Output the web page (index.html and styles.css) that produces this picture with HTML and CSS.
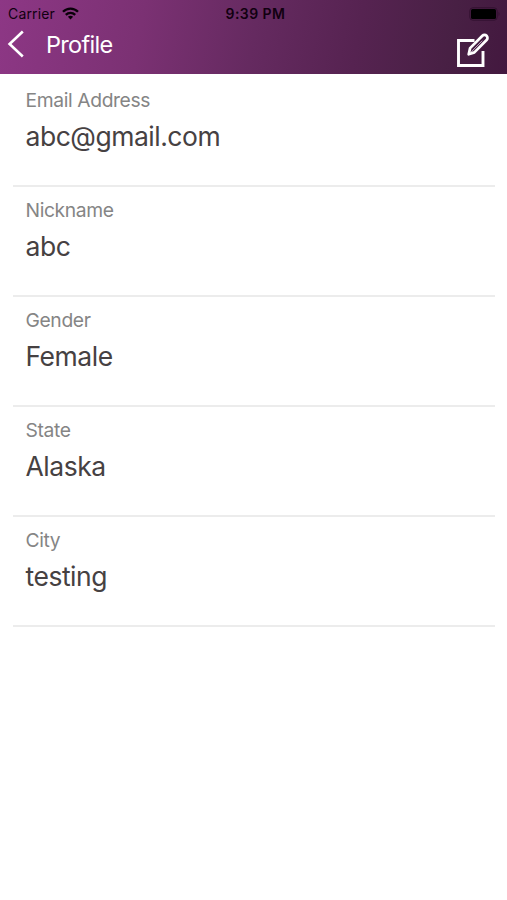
FILE: index.html
```html
<!DOCTYPE html>
<html lang="en">
<head>
<meta charset="utf-8">
<title>Profile</title>
<link rel="stylesheet" href="styles.css">
</head>
<body>
<header class="header">
  <div class="status">
    <div class="carrier"><span>Carrier</span>
      <svg class="wifi" width="17" height="13" viewBox="0 0 17 13" fill="none" stroke="#090009" stroke-width="2.3"><path d="M1 4.8C5.2.5 11.8.5 16 4.8M3.8 7.9c2.7-2.7 6.7-2.7 9.4 0"/><path d="M5.9 9.7c1.5-1.4 3.7-1.4 5.2 0l-2.6 2.7z" fill="#090009" stroke="none"/></svg>
    </div>
    <time class="clock">9:39 PM</time>
    <svg class="battery" width="32" height="14" viewBox="0 0 32 14"><rect x=".8" y=".8" width="27.4" height="12.4" rx="3" fill="none" stroke="#321030" stroke-width="1"/><rect x="2" y="2" width="25" height="10" rx="1.5" fill="#000"/><path d="M29.5 4.8q2 2.2 0 4.4z" fill="#321030"/></svg>
  </div>
  <nav class="nav">
    <svg class="back" width="18" height="30" viewBox="0 0 18 30" fill="none" stroke="#fff" stroke-width="2.6"><path d="M15.8 2.5 2.6 15l13.2 12.5"/></svg>
    <h1 class="title">Profile</h1>
    <svg class="edit" width="34" height="34" viewBox="0 0 34 34" fill="none" stroke="#fff" stroke-width="2.9"><path d="M18.5 6.5H2.5v25H27V17"/><path d="m12.7 20.3 1.4-6.2L26.4 1.8a2.9 2.9 0 0 1 4.2 4.2L18.4 18.4z" stroke-width="2.7" stroke-linejoin="round"/><path d="m14.7 18.5 11.5-11.8" stroke="#ddcede" stroke-width=".8"/></svg>
  </nav>
</header>
<main class="fields">
  <section class="field"><div class="label">Email Address</div><div class="value">abc@gmail.com</div></section>
  <section class="field"><div class="label">Nickname</div><div class="value">abc</div></section>
  <section class="field"><div class="label">Gender</div><div class="value">Female</div></section>
  <section class="field"><div class="label">State</div><div class="value">Alaska</div></section>
  <section class="field"><div class="label">City</div><div class="value">testing</div></section>
</main>
</body>
</html>
```
FILE: styles.css
```css
* { box-sizing: border-box; }
body { margin: 0; background: #fff; font-family: Inter, "Liberation Sans", sans-serif; }
svg { display: block; flex: none; overflow: visible; }
.header { height: 74px; background: linear-gradient(100deg, #8d3785 0%, #7b3173 28%, #652a60 50%, #562351 70%, #482044 88%, #43183f 100%); }
.status { height: 26px; display: grid; grid-template-columns: 1fr auto 1fr; align-items: center; padding: 1px 6px 0 8px; color: #110010; font-size: 14px; line-height: 18px; }
.carrier { display: flex; align-items: center; gap: 7px; letter-spacing: .15px; }
.clock { padding-left: 2px; font-weight: 600; letter-spacing: .45px; }
.battery { justify-self: end; }
.nav { height: 48px; display: flex; align-items: flex-start; padding: 3px 17px 0 7px; }
.title { margin: 1px 0 0 21px; color: #fff; font-size: 23.5px; line-height: 30px; font-weight: 400; letter-spacing: -.7px; }
.edit { margin: 5px 0 0 auto; }
.fields { padding: 3px 12px 0 13px; }
.field { height: 110px; padding: 11px 12.5px 0; border-bottom: 2px solid #ececec; }
.label { color: #858585; font-size: 19.3px; line-height: 24px; letter-spacing: -.38px; }
.value { margin-top: 7px; color: #464142; font-size: 26.5px; line-height: 34px; letter-spacing: -.48px; }
```
